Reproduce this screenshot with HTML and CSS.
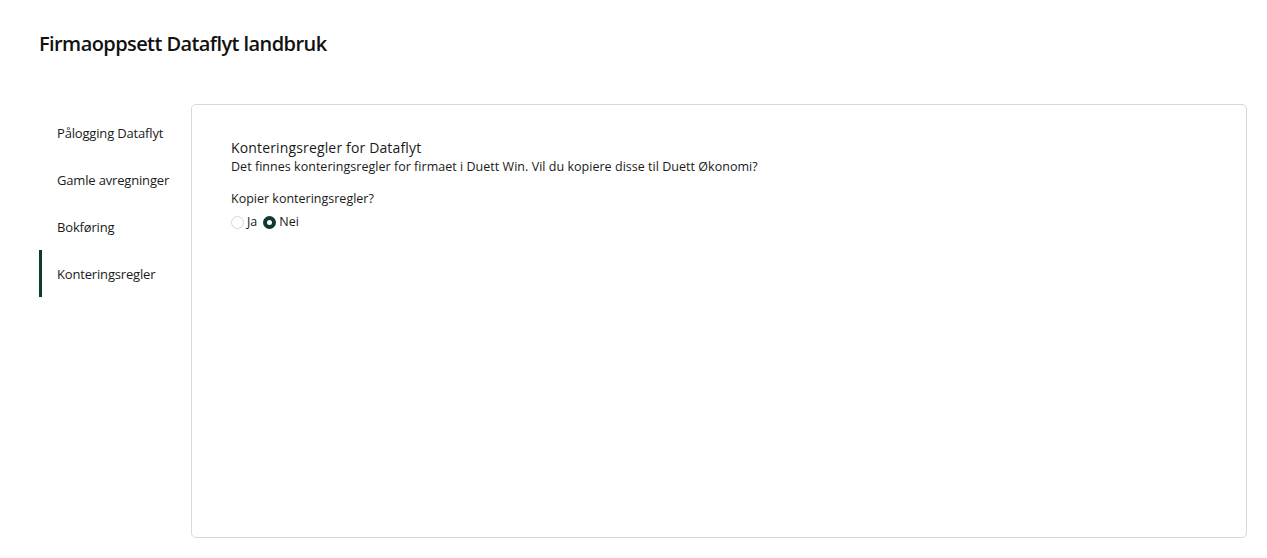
FILE: index.html
```html
<!DOCTYPE html>
<html lang="no">
<head>
<meta charset="utf-8">
<title>Firmaoppsett Dataflyt landbruk</title>
<link rel="stylesheet" href="styles.css">
</head>
<body>
<div class="page">
  <h1 class="title">Firmaoppsett Dataflyt landbruk</h1>
  <div class="layout">
    <nav class="sidenav">
      <a class="nav-item">Pålogging Dataflyt</a>
      <a class="nav-item">Gamle avregninger</a>
      <a class="nav-item">Bokføring</a>
      <a class="nav-item active">Konteringsregler</a>
    </nav>
    <section class="card">
      <h2 class="card-title">Konteringsregler for Dataflyt</h2>
      <p class="card-desc">Det finnes konteringsregler for firmaet i Duett Win. Vil du kopiere disse til Duett Økonomi?</p>
      <div class="field">
        <div class="field-label">Kopier konteringsregler?</div>
        <div class="radios">
          <label class="radio"><span class="dot"></span>Ja</label>
          <label class="radio"><span class="dot checked"></span>Nei</label>
        </div>
      </div>
    </section>
  </div>
</div>
</body>
</html>
```

FILE: styles.css
```css
* { box-sizing: border-box; }
html, body { margin: 0; padding: 0; background: #fff; }
body {
  font-family: "Open Sans", "Liberation Sans", sans-serif;
  color: #1a1a1a;
}
.page {
  padding: 30px 20px 20px 39px;
  height: 558px;
  display: flex;
  flex-direction: column;
}
.title {
  margin: 0;
  font-size: 20px;
  font-weight: 600;
  line-height: 28px;
  letter-spacing: -0.58px;
  color: #111;
}
.layout {
  display: flex;
  flex: 1;
  margin-top: 46px;
}
.sidenav {
  width: 152px;
  flex-shrink: 0;
  display: flex;
  flex-direction: column;
  padding-top: 5px;
}
.nav-item {
  display: flex;
  align-items: center;
  height: 47px;
  padding-left: 15px;
  font-size: 13px;
  letter-spacing: -0.17px;
  color: #1a1a1a;
  border-left: 3px solid transparent;
}
.nav-item.active {
  border-left-color: #0e3b2e;
}
.card {
  flex: 1;
  border: 1px solid #d9d9d9;
  border-radius: 5px;
  padding: 33px 39px;
}
.card-title {
  margin: 0;
  font-size: 14px;
  font-weight: 400;
  line-height: 20px;
  letter-spacing: 0.15px;
  color: #1a1a1a;
}
.card-desc {
  margin: 0;
  font-size: 12.5px;
  line-height: 18px;
  letter-spacing: 0.03px;
  color: #1a1a1a;
}
.field { margin-top: 14px; }
.field-label {
  font-size: 12.5px;
  line-height: 18px;
  color: #1a1a1a;
}
.radios {
  display: flex;
  gap: 6px;
  margin-top: 5px;
}
.radio {
  display: flex;
  align-items: center;
  gap: 3px;
  font-size: 12.5px;
  line-height: 18px;
}
.dot {
  width: 13px;
  height: 13px;
  border-radius: 50%;
  border: 1px solid #d6d6d6;
  background: #fff;
  display: inline-block;
}
.dot.checked {
  border: 4px solid #0e3b2e;
  background: #fff;
}
```
